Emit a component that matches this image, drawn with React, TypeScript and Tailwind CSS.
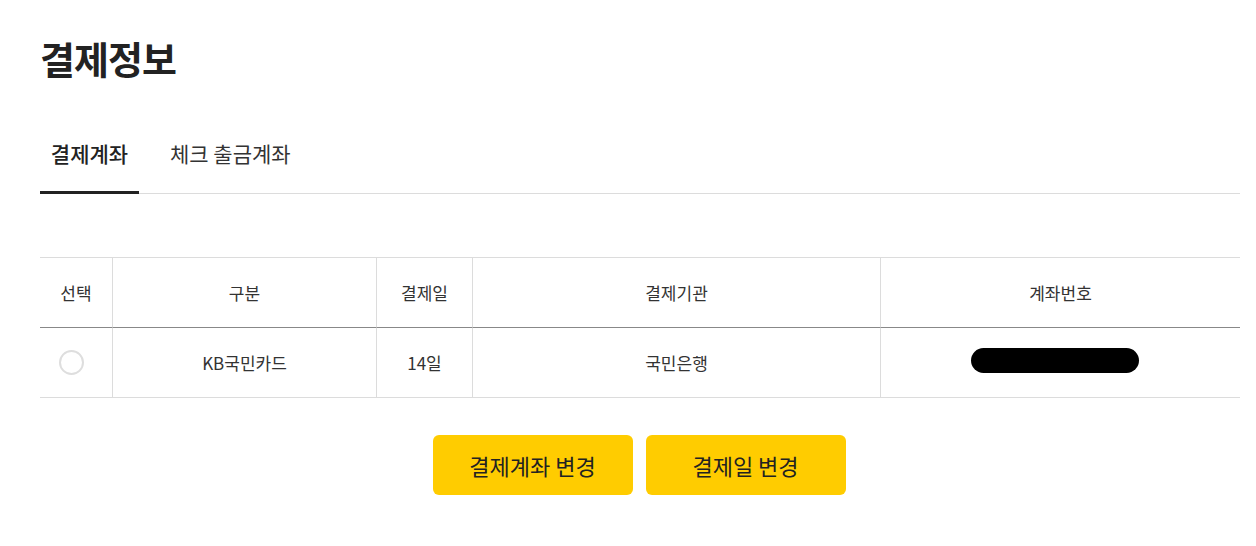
import React from "react";

export default function App() {
  const font = { fontFamily: '"Noto Sans CJK KR", "Noto Sans", sans-serif' };
  return (
    <div className="w-[1256px] h-[546px] bg-white text-[#222]" style={font}>
      <div className="pl-[40px] pr-[16px]">
        <h1 className="pt-[30px] text-[38px] font-bold leading-[56px] tracking-[-1px] text-[#222]">결제정보</h1>
        <div className="mt-[52px] flex border-b border-[#dcdcdc]">
          <div className="w-[99px] flex justify-center border-b-[3px] border-[#222] -mb-px pb-[23px] text-[21px] leading-[30px] font-medium">결제계좌</div>
          <div className="ml-[31px] pb-[23px] text-[21px] leading-[30px] text-[#333]">체크 출금계좌</div>
        </div>
        <div className="mt-[63px]">
          <div className="grid grid-cols-[72px_264px_96px_408px_1fr] border-t border-[#dcdcdc] text-[17px] text-[#333]">
            <div className="h-[70px] flex items-center justify-center border-b border-[#888]">선택</div>
            <div className="h-[70px] flex items-center justify-center border-b border-l border-b-[#888] border-l-[#dcdcdc]">구분</div>
            <div className="h-[70px] flex items-center justify-center border-b border-l border-b-[#888] border-l-[#dcdcdc]">결제일</div>
            <div className="h-[70px] flex items-center justify-center border-b border-l border-b-[#888] border-l-[#dcdcdc]">결제기관</div>
            <div className="h-[70px] flex items-center justify-center border-b border-l border-b-[#888] border-l-[#dcdcdc]">계좌번호</div>
            <div className="h-[70px] flex items-center justify-center border-b border-[#dcdcdc]">
              <div className="w-[25px] h-[25px] rounded-full border-2 border-[#dedede] -ml-[10px]" />
            </div>
            <div className="h-[70px] flex items-center justify-center border-b border-l border-[#dcdcdc]">KB국민카드</div>
            <div className="h-[70px] flex items-center justify-center border-b border-l border-[#dcdcdc]">14일</div>
            <div className="h-[70px] flex items-center justify-center border-b border-l border-[#dcdcdc]">국민은행</div>
            <div className="h-[70px] flex items-center justify-center border-b border-l border-[#dcdcdc]">
              <div className="w-[168px] h-[25px] rounded-full bg-black -mt-[4px] -ml-[12px]" />
            </div>
          </div>
        </div>
        <div className="mt-[37px] flex justify-center gap-[13px] pr-[2px]">
          <button className="w-[200px] h-[60px] rounded-[6px] bg-[#ffcc00] text-[22px] text-[#222]">결제계좌 변경</button>
          <button className="w-[200px] h-[60px] rounded-[6px] bg-[#ffcc00] text-[22px] text-[#222]">결제일 변경</button>
        </div>
      </div>
    </div>
  );
}
